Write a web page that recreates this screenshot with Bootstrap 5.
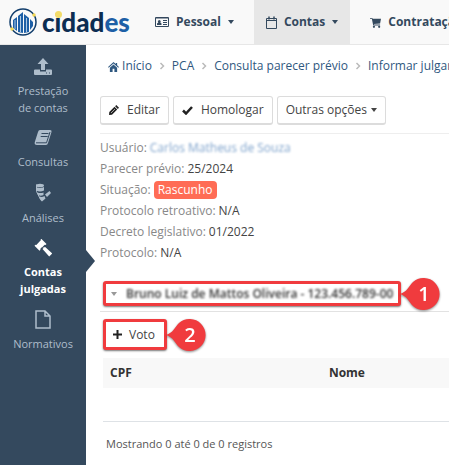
<!DOCTYPE html>
<html lang="pt-BR">
<head>
<meta charset="utf-8">
<meta name="viewport" content="width=device-width, initial-scale=1">
<title>CidadES - Contas julgadas</title>
<link rel="stylesheet" href="https://cdn.jsdelivr.net/npm/bootstrap@5.3.0/dist/css/bootstrap.min.css">
<style>
body{font-family:"Open Sans","Noto Sans",sans-serif;font-size:12px;line-height:18px;color:#394650;background:#fff}
a{text-decoration:none}
.topbar{height:45px;background:#f9f9f9;border-bottom:1px solid #e7e7e7;white-space:nowrap}
.brand{width:143px;padding-left:8px}
.brand-name{font-family:Lato,"Open Sans",sans-serif;font-weight:900;font-size:26px;line-height:28px;color:#0c2d52;margin-left:4px}
.brand-name span{color:#1d5fa6}
.brand-name i{font-style:normal;position:relative}
.brand-name i::before{content:"";position:absolute;left:0;top:5px;width:7px;height:7px;border-radius:50%;background:#f3dc6a}
.menu-link{color:#34495e;font-weight:700;gap:7px;padding:0 12px;height:44px}
.menu-link.active{background:#e7e7e7}
.caret{width:0;height:0;border:3px solid transparent;border-top:4px solid currentColor;border-bottom:0}
.sidebar{width:86px;background:#34495e;flex:none;padding-top:13px}
.side-link{color:#aebdcb;font-size:11px;line-height:17px;gap:6px;padding-bottom:13px;text-align:center;position:relative}
.side-link.active{color:#fff;font-weight:700}
.side-link.active::after{content:"";position:absolute;left:100%;top:11px;border:11px solid transparent;border-left:9px solid #34495e;border-right:0}
.content-area{min-width:0;padding:12px 0 0 14px}
.crumbs{white-space:nowrap;gap:7px;margin-left:8px;margin-bottom:21px}
.crumbs a{color:#2f5880}
.tool{font-size:12px;line-height:18px;padding:4px 8px;border:1px solid #dcdcdc;border-bottom-width:2px;border-radius:3px;background:#fff;color:#444}
.tool svg{color:#222}
.details{border-top:1px solid #eee;margin-top:8px;padding-top:3px;line-height:21px;color:#888}
.details dt{font-weight:400}
.details dd{margin:0 0 0 3px;color:#444}
.tag{background:#ff6c55;color:#fff;border-radius:4px;line-height:18px;padding:0 4px}
.obscured{filter:blur(1px)}
.details .obscured{color:#7fa3cc}
.marked{border:3px solid #f03b3e;border-radius:3px;box-shadow:0 1px 2px #0008;background:#fff}
.person{border-bottom:1px solid #e2e2e2;padding:0 0 5px 3px;margin-top:18px}
.person-btn{width:298px;height:25px;padding:0 0 0 5px;gap:9px;font-size:12px;line-height:18px;font-weight:600;color:#333;white-space:nowrap}
.person-btn .caret{color:#999}
.vote-area{padding:7px 0 0 3px}
.vote-btn{width:64px;height:31px;padding:0 0 0 7px;gap:7px;color:#444}
.vote-btn svg{color:#222}
.pin{margin:-8px 0 -8px -1px;filter:drop-shadow(0 1px 1px #0007)}
.results{margin:8px 0 0;table-layout:fixed}
.results th{background:#f8f8f8;padding:6px 7px;color:#333;font-weight:700;height:30px}
.results .col-cpf{width:41%}
.results td{height:33px}
.summary{font-size:11px;padding:13px 3px;color:#555}
</style>
<script src="https://cdn.jsdelivr.net/npm/bootstrap@5.3.0/dist/js/bootstrap.bundle.min.js"></script>
</head>
<body class="d-flex flex-column min-vh-100 overflow-hidden">
<header class="topbar d-flex overflow-hidden">
  <a href="#" class="brand d-flex align-items-center flex-shrink-0">
    <svg width="30" height="30" viewBox="0 0 30 30" fill="none">
      <circle cx="15" cy="15" r="13" stroke="#123e6c" stroke-width="1.500"/>
      <path d="M5 21V13l4-3v14zM10 25V9l5-4v21zM16 26V7l5 4v14zM22 23V12l3 3v4z" fill="#1d5fa6"/>
      <path d="M7 22V13M12.500 25V9M18.500 25V11" stroke="#a9c8e5"/>
      <path d="M9.500 25V10M15.500 27V6M21.500 24V12" stroke="#f9f9f9"/>
      <circle cx="26" cy="8" r="1.700" fill="#f3d750"/><circle cx="4" cy="22" r="1.700" fill="#f3d750"/>
    </svg>
    <div class="brand-name">c<i>i</i>dad<span>es</span></div>
  </a>
  <nav class="d-flex gap-2">
    <a href="#" class="menu-link d-flex align-items-center">
      <svg width="14" height="12" viewBox="0 0 14 12" fill="none" stroke="currentColor"><path d="M.5 1.500h13v9H.5z"/><path d="M2 9h4.500V7.500L5.300 6.500a1.400 1.400 0 1 0-2 0L2 7.500z" fill="currentColor" stroke="none"/><path d="M8 4.500h4M8 6.500h4M8 8.500h4M1 2h12"/></svg>
      Pessoal <span class="caret"></span></a>
    <a href="#" class="menu-link active d-flex align-items-center">
      <svg width="11" height="13" viewBox="0 0 11 13" fill="none" stroke="currentColor"><path d="M.5 2.500h10v10H.5zM1 4.500h9"/><path d="M3 .5v3M8 .5v3" stroke-width="1.500"/></svg>
      Contas <span class="caret"></span></a>
    <a href="#" class="menu-link d-flex align-items-center">
      <svg class="flex-shrink-0" width="11" height="11" viewBox="0 0 12 12" fill="currentColor"><path d="M0 1h2.500l.4 1H12l-1 5-6.800.6.200.7H11v1H3.500L2 2H0z"/><circle cx="4.300" cy="10.700" r="1.200"/><circle cx="10" cy="10.700" r="1.200"/></svg>
      Contrataçã</a>
  </nav>
</header>
<div class="d-flex flex-grow-1">
  <nav class="sidebar d-flex flex-column">
    <a href="#" class="side-link d-flex flex-column align-items-center">
      <svg width="18" height="18" viewBox="0 0 18 18" fill="currentColor"><path d="M9 0l5.500 6H11v6H7V6H3.500zM1 11.500h5v2h6v-2h5a1 1 0 0 1 1 1V16a1 1 0 0 1-1 1H1a1 1 0 0 1-1-1v-3.500a1 1 0 0 1 1-1z"/><path d="M12 15h1M15 15h1" stroke="#34495e"/></svg>
      <span>Prestação<br>de contas</span></a>
    <a href="#" class="side-link d-flex flex-column align-items-center">
      <svg width="18" height="18" viewBox="0 0 18 18"><path d="M6 1h10q2 0 1.500 2L14 14q-.5 2-2 2H3q-3 0-2.200-3L4 3q.5-2 2-2z" fill="currentColor"/><path d="M7.500 4.500h7M6.700 7.500h7" stroke="#34495e" stroke-width="1.200"/><path d="M2 13.800h10.500L16 3" fill="none" stroke="#34495e"/></svg>
      Consultas</a>
    <a href="#" class="side-link d-flex flex-column align-items-center">
      <svg width="18" height="20" viewBox="0 0 18 20" fill="currentColor"><ellipse cx="6" cy="2.500" rx="4" ry="1.800"/><path d="M2 4q4 2 8 0v3.500q-4 2-8 0zM3.500 9.500q3 1.200 6 0v2.500q-3 1.500-5.500 0zM5.500 13.500q2.500 1 5-.5l1 2.500-3.500 3q-2-1-2.500-5zM11 11.500l4.500-3.500 1.500 2-4 4z"/><path d="M2.500 1.500v7l4 8" fill="none" stroke="currentColor"/></svg>
      Análises</a>
    <a href="#" class="side-link active d-flex flex-column align-items-center" aria-current="page">
      <svg width="18" height="18" viewBox="0 0 18 18" fill="currentColor"><path d="M7.500 0l5 5-1 1-.8-.3-2 2 1.200 1 1-1 7.300 6.800-3 3L8.500 10l1-1-1.200-1.200-2.100 2.200.3.800-1 1-5-5 1-1 .8.300 4.700-5-.4-1z"/></svg>
      <span>Contas<br>julgadas</span></a>
    <a href="#" class="side-link d-flex flex-column align-items-center">
      <svg width="16" height="19" viewBox="0 0 16 19" fill="none" stroke="currentColor" stroke-width="1.500"><path d="M1 1h9l5 5v12H1zM10 1v5h5"/></svg>
      Normativos</a>
  </nav>
  <main class="content-area flex-grow-1">
    <nav class="crumbs d-flex align-items-center overflow-hidden" aria-label="Trilha">
      <a href="#"><svg width="11" height="10" viewBox="0 0 12 11" fill="currentColor"><path d="M6 0l2.500 2.200V1H10v2.600L12 5.500l-.7.800L6 1.700.7 6.300 0 5.500zM2 6.300l4-3.500 4 3.500V11H7V7.500H5V11H2z"/></svg> Início</a>
      <svg class="flex-shrink-0" width="6" height="8" viewBox="0 0 5 8" fill="none" stroke="#bbb" stroke-width="1.500"><path d="M1 1l3 3-3 3"/></svg>
      <a href="#">PCA</a>
      <svg class="flex-shrink-0" width="6" height="8" viewBox="0 0 5 8" fill="none" stroke="#bbb" stroke-width="1.500"><path d="M1 1l3 3-3 3"/></svg>
      <a href="#">Consulta parecer prévio</a>
      <svg class="flex-shrink-0" width="6" height="8" viewBox="0 0 5 8" fill="none" stroke="#bbb" stroke-width="1.500"><path d="M1 1l3 3-3 3"/></svg>
      <a href="#">Informar julgar</a>
    </nav>
    <div class="d-flex gap-1">
      <button type="button" class="tool d-flex align-items-center gap-2"><svg width="10" height="10" viewBox="0 0 10 10" fill="currentColor"><path d="M7.300 0L10 2.700 8.800 3.900 6.100 1.200zM5.500 1.800l2.700 2.700L3 9.700 0 10l.3-3z"/><path d="M2 8l4-4" stroke="#fff" stroke-width=".6"/></svg>Editar</button>
      <button type="button" class="tool d-flex align-items-center gap-2"><svg width="11" height="9" viewBox="0 0 11 9" fill="none" stroke="currentColor" stroke-width="2.500"><path d="M1 4.500l3 3L10 1"/></svg>Homologar</button>
      <button type="button" class="tool d-flex align-items-center gap-1">Outras opções<span class="caret"></span></button>
    </div>
    <dl class="details mb-0">
      <div class="d-flex"><dt>Usuário:</dt><dd><a href="#" class="obscured d-block">Carlos Matheus de Souza</a></dd></div>
      <div class="d-flex"><dt>Parecer prévio:</dt><dd>25/2024</dd></div>
      <div class="d-flex"><dt>Situação:</dt><dd><span class="tag d-inline-block">Rascunho</span></dd></div>
      <div class="d-flex"><dt>Protocolo retroativo:</dt><dd>N/A</dd></div>
      <div class="d-flex"><dt>Decreto legislativo:</dt><dd>01/2022</dd></div>
      <div class="d-flex"><dt>Protocolo:</dt><dd>N/A</dd></div>
    </dl>
    <div class="person d-flex align-items-center">
      <button type="button" class="person-btn marked d-flex align-items-center"><span class="caret"></span><span class="obscured">Bruno Luiz de Mattos Oliveira - 123.456.789-00</span></button>
      <svg class="pin flex-shrink-0" width="42" height="34" viewBox="0 0 42 34"><path d="M0 17C7 15 9 9 13 5a16 16 0 1 1 0 24C9 25 7 19 0 17z" fill="#f03b3e"/><text x="24" y="24" text-anchor="middle" font-size="20" font-weight="600" fill="#fff">1</text></svg>
    </div>
    <section class="vote-area">
      <div class="d-flex align-items-center">
        <button type="button" class="vote-btn marked d-flex align-items-center"><svg width="9" height="9" viewBox="0 0 9 9" stroke="currentColor" stroke-width="2"><path d="M4.500 0v9M0 4.500h9"/></svg>Voto</button>
        <svg class="pin flex-shrink-0" width="42" height="34" viewBox="0 0 42 34"><path d="M0 17C7 15 9 9 13 5a16 16 0 1 1 0 24C9 25 7 19 0 17z" fill="#f03b3e"/><text x="24" y="24" text-anchor="middle" font-size="20" font-weight="600" fill="#fff">2</text></svg>
      </div>
      <table class="results table table-borderless border-bottom">
        <thead><tr><th scope="col" class="col-cpf">CPF</th><th scope="col" class="text-center">Nome</th></tr></thead>
        <tbody><tr><td colspan="2"></td></tr></tbody>
      </table>
      <div class="summary">Mostrando 0 até 0 de 0 registros</div>
    </section>
  </main>
</div>
</body>
</html>
